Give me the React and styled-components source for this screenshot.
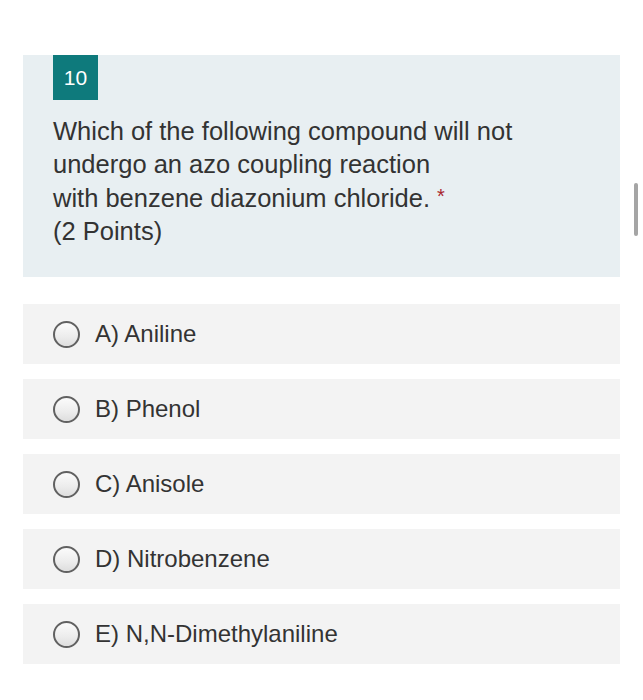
import React from "react";
import styled, { createGlobalStyle } from "styled-components";

const Global = createGlobalStyle`
  html, body { margin: 0; padding: 0; background: #ffffff; }
  body { font-family: "Liberation Sans", Arial, Helvetica, sans-serif; }
`;

const Page = styled.div`
  position: relative;
  width: 643px;
  height: 700px;
  padding: 55px 23px 0 23px;
  box-sizing: border-box;
  display: flex;
  flex-direction: column;
`;

const QuestionCard = styled.div`
  background: #e8eff2;
  padding: 0 30px 29px 30px;
  display: flex;
  flex-direction: column;
  align-items: flex-start;
`;

const Badge = styled.div`
  width: 45px;
  height: 45px;
  background: #0e7a7c;
  color: #ffffff;
  font-size: 21px;
  display: flex;
  align-items: center;
  justify-content: center;
`;

const QuestionText = styled.div`
  margin-top: 15px;
  font-size: 25.5px;
  line-height: 33.3px;
  color: #333333;
`;

const Required = styled.span`
  position: relative;
  top: -4px;
  color: #a8262e;
  font-size: 20px;
  line-height: 0;
  margin-left: 7px;
`;

const Options = styled.div`
  margin-top: 27px;
  display: flex;
  flex-direction: column;
  gap: 15px;
`;

const Option = styled.label`
  height: 60px;
  background: #f3f3f3;
  display: flex;
  align-items: center;
  padding-left: 30px;
  gap: 15px;
  font-size: 24px;
  color: #333333;
`;

const Radio = styled.span`
  width: 27px;
  height: 27px;
  box-sizing: border-box;
  border-radius: 50%;
  border: 2px solid #616161;
  background: linear-gradient(180deg, #fbfbfb 0%, #ececec 60%, #dedede 100%);
  flex: none;
`;

const Scrollbar = styled.div`
  position: absolute;
  left: 634px;
  top: 183px;
  width: 4px;
  height: 53px;
  border-radius: 2px;
  background: #a5a5a5;
`;

const options = [
  "A) Aniline",
  "B) Phenol",
  "C) Anisole",
  "D) Nitrobenzene",
  "E) N,N-Dimethylaniline",
];

export default function App() {
  return (
    <>
      <Global />
      <Page>
        <QuestionCard>
          <Badge>10</Badge>
          <QuestionText>
            Which of the following compound will not
            <br />
            undergo an azo coupling reaction
            <br />
            with benzene diazonium chloride.<Required>*</Required>
            <br />
            (2 Points)
          </QuestionText>
        </QuestionCard>
        <Options>
          {options.map((o) => (
            <Option key={o}>
              <Radio />
              {o}
            </Option>
          ))}
        </Options>
        <Scrollbar />
      </Page>
    </>
  );
}
